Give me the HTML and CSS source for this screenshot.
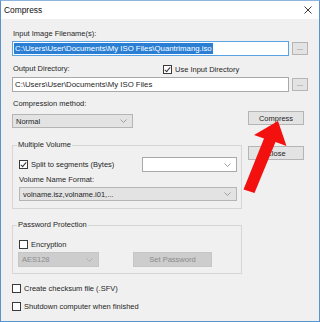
FILE: index.html
```html
<!DOCTYPE html>
<html lang="en">
<head>
    <meta charset="UTF-8">
    <title>Compress</title>
    <link rel="stylesheet" href="styles.css">
</head>
<body>

<div class="window">
    <div class="titlebar">
        <span class="title">Compress</span>
        <svg class="close-x" width="8" height="8" viewBox="0 0 8 8">
            <path d="M0.5 0.5 L7.5 7.5 M7.5 0.5 L0.5 7.5" stroke="#222" stroke-width="0.9" fill="none"/>
        </svg>
    </div>

    <div class="content">
        <div class="label first">Input Image Filename(s):</div>
        <div class="path-row">
            <div class="textbox focused"><span class="selected">C:\Users\User\Documents\My ISO Files\Quantrimang.iso</span></div>
            <div class="btn browse">...</div>
        </div>

        <div class="out-row">
            <div class="label out-label">Output Directory:</div>
            <div class="check-item">
                <span class="checkbox checked"></span>
                <span>Use Input Directory</span>
            </div>
        </div>
        <div class="path-row second">
            <div class="textbox"><span class="path">C:\Users\User\Documents\My ISO Files</span></div>
            <div class="btn browse">...</div>
        </div>

        <div class="lower">
            <div class="left-col">
                <div class="label method-label">Compression method:</div>
                <div class="combo gray method">
                    <span>Normal</span>
                    <svg class="chev" width="7" height="4" viewBox="0 0 7 4"><path d="M0.5 0.5 L3.5 3.5 L6.5 0.5" stroke="#8a8a8a" stroke-width="0.8" fill="none"/></svg>
                </div>

                <fieldset class="group volume">
                    <legend>Multiple Volume</legend>
                    <div class="split-row">
                        <div class="check-item">
                            <span class="checkbox checked"></span>
                            <span>Split to segments (Bytes)</span>
                        </div>
                        <div class="combo white seg">
                            <span></span>
                            <svg class="chev" width="7" height="4" viewBox="0 0 7 4"><path d="M0.5 0.5 L3.5 3.5 L6.5 0.5" stroke="#8a8a8a" stroke-width="0.8" fill="none"/></svg>
                        </div>
                    </div>
                    <div class="label name-label">Volume Name Format:</div>
                    <div class="combo gray names">
                        <span>volname.isz,volname.i01,...</span>
                        <svg class="chev" width="7" height="4" viewBox="0 0 7 4"><path d="M0.5 0.5 L3.5 3.5 L6.5 0.5" stroke="#8a8a8a" stroke-width="0.8" fill="none"/></svg>
                    </div>
                </fieldset>

                <fieldset class="group password">
                    <legend>Password Protection</legend>
                    <div class="check-item enc">
                        <span class="checkbox"></span>
                        <span>Encryption</span>
                    </div>
                    <div class="pass-row">
                        <div class="combo disabled aes">
                            <span>AES128</span>
                            <svg class="chev" width="7" height="4" viewBox="0 0 7 4"><path d="M0.5 0.5 L3.5 3.5 L6.5 0.5" stroke="#a8a8a8" stroke-width="0.8" fill="none"/></svg>
                        </div>
                        <div class="btn disabled setpass">Set Password</div>
                    </div>
                </fieldset>

                <div class="check-item option first-opt">
                    <span class="checkbox"></span>
                    <span>Create checksum file (.SFV)</span>
                </div>
                <div class="check-item option second-opt">
                    <span class="checkbox"></span>
                    <span>Shutdown computer when finished</span>
                </div>
            </div>

            <div class="right-col">
                <div class="btn action compress">Compress</div>
                <div class="btn action close">Close</div>
            </div>
        </div>
    </div>

    <!-- red pointer drawn over the dialog -->
    <svg class="arrow" width="320" height="322" viewBox="0 0 320 322">
        <polygon points="278,121 254,135 264,138.5 243.5,189.5 254.5,193 275.5,142 286.5,146" fill="#f2110f"/>
    </svg>
</div>

</body>
</html>
```

FILE: styles.css
```css
body {
    margin: 0;
    padding: 0;
    font-family: "Liberation Sans", Arial, sans-serif;
    font-size: 7.5px;
    color: #262626;
}
.window {
    position: relative;
    width: 320px;
    height: 322px;
    box-sizing: border-box;
    border: 1px solid #5a93cb;
    border-top-color: #8fb5dc;
    background-color: #f0f0f0;
    overflow: hidden;
}
.titlebar {
    height: 18px;
    background-color: #fff;
    display: flex;
    align-items: center;
    justify-content: space-between;
    padding: 0 7px 0 3px;
}
.title {
    font-size: 8.4px;
    color: #111;
    margin-top: -1px;
}
.close-x {
    margin-top: -1px;
}
.content {
    padding: 0 11px;
}
.label {
    height: 10px;
    line-height: 10px;
    white-space: nowrap;
}
.label.first {
    margin-top: 10px;
    padding-left: 1px;
}
.path-row {
    display: flex;
    align-items: center;
    gap: 3px;
    margin-top: 2px;
}
.path-row.second {
    margin-top: 3px;
}
.textbox {
    width: 277px;
    height: 15px;
    box-sizing: border-box;
    border: 1px solid #a9a9a9;
    background-color: #fff;
    display: flex;
    align-items: center;
    padding-left: 1px;
    font-size: 7.8px;
    white-space: nowrap;
    overflow: hidden;
}
.textbox.focused {
    border-color: #58a3e4;
}
.selected {
    background-color: #2a7fd4;
    color: #fff;
    line-height: 11px;
    padding: 0 1px;
}
.path {
    padding-left: 1px;
}
.btn {
    box-sizing: border-box;
    border: 1px solid #b5b5b5;
    background-color: #e3e3e3;
    display: flex;
    align-items: center;
    justify-content: center;
    white-space: nowrap;
}
.btn.browse {
    width: 16px;
    height: 13px;
    color: #555;
    font-size: 7px;
    padding-bottom: 2px;
}
.out-row {
    display: flex;
    align-items: center;
    margin-top: 8px;
}
.out-label {
    width: 150px;
    padding-left: 1px;
}
.check-item {
    display: flex;
    align-items: center;
    gap: 3px;
    height: 10px;
    white-space: nowrap;
}
.checkbox {
    width: 9px;
    height: 9px;
    box-sizing: border-box;
    border: 1px solid #3a3a3a;
    background-color: #fff;
    position: relative;
    flex: none;
}
.checkbox.checked::after {
    content: "";
    position: absolute;
    left: 2px;
    top: 0px;
    width: 2px;
    height: 5px;
    border: solid #333;
    border-width: 0 1px 1px 0;
    transform: rotate(40deg);
}
.lower {
    display: flex;
}
.left-col {
    width: 230px;
}
.right-col {
    margin-left: 6px;
    width: 56px;
}
.method-label {
    margin-top: 7px;
    padding-left: 1px;
}
.combo {
    height: 14px;
    box-sizing: border-box;
    border: 1px solid #b5b5b5;
    display: flex;
    align-items: center;
    justify-content: space-between;
    padding: 0 5px 0 3px;
    white-space: nowrap;
}
.combo.gray {
    background-color: #e3e3e3;
}
.combo.white {
    background-color: #fff;
    border-color: #a9a9a9;
}
.combo.disabled {
    background-color: #cdcdcd;
    border-color: #c6c6c6;
    color: #8c8c8c;
}
.method {
    width: 121px;
    margin-top: 5px;
}
.group {
    margin: 0;
    padding: 0 4px 7px 6px;
    border: 1px solid #d6d6d6;
    min-width: 0;
}
.group legend {
    padding: 0 1px;
    margin-left: -2px;
    line-height: 10px;
    height: 10px;
}
.volume {
    margin-top: 12px;
}
.split-row {
    display: flex;
    align-items: center;
    justify-content: space-between;
    margin-top: 7px;
}
.seg {
    width: 95px;
    height: 15px;
}
.name-label {
    margin-top: 3px;
}
.names {
    margin-top: 2px;
}
.password {
    margin-top: 11px;
    padding-bottom: 6px;
}
.enc {
    margin-top: 9px;
}
.pass-row {
    display: flex;
    align-items: center;
    margin-top: 3px;
}
.aes {
    width: 81px;
    height: 15px;
    margin-left: -1px;
}
.btn.disabled {
    background-color: #cdcdcd;
    border-color: #c6c6c6;
    color: #8c8c8c;
}
.setpass {
    width: 79px;
    height: 15px;
    margin-left: 34px;
}
.option {
    margin-top: 9px;
}
.second-opt {
    margin-top: 8px;
}
.btn.action {
    width: 56px;
    height: 14px;
}
.compress {
    margin-top: 19px;
}
.close {
    margin-top: 21px;
}
.arrow {
    position: absolute;
    left: -1px;
    top: -1px;
}
```
